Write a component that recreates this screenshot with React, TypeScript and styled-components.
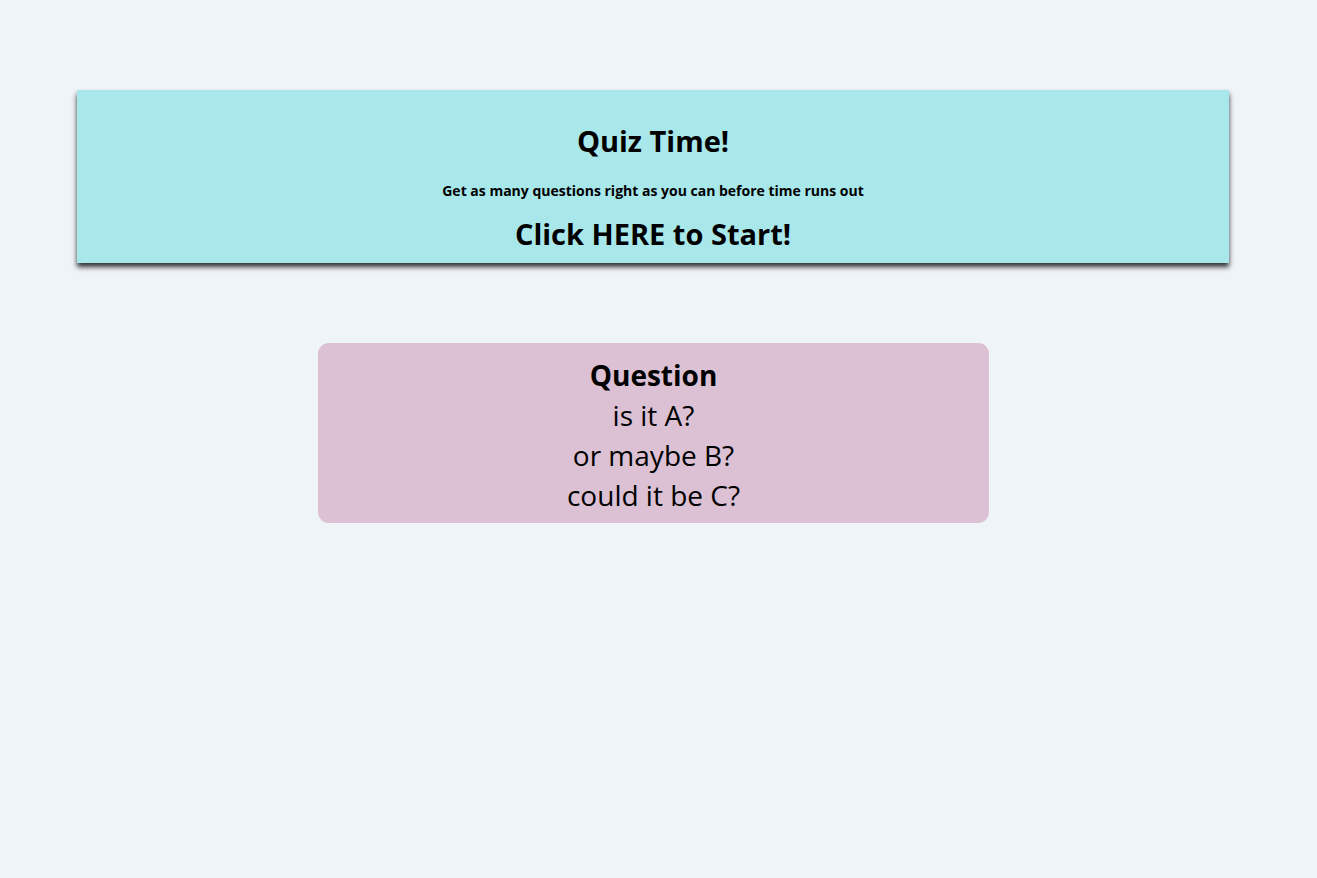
import React from 'react';
import styled, { createGlobalStyle } from 'styled-components';

const GlobalStyle = createGlobalStyle`
  html, body {
    margin: 0;
    padding: 0;
    background: #eff4f8;
    font-family: 'Open Sans', 'Noto Sans', sans-serif;
    color: #000;
  }
`;

const Page = styled.div`
  display: flex;
  flex-direction: column;
  align-items: flex-start;
  padding: 90px 0 0 77px;
  min-height: 100vh;
  box-sizing: border-box;
`;

const Header = styled.header`
  width: 1152px;
  height: 173px;
  box-sizing: border-box;
  background: #a8e7ea;
  box-shadow: 0 4px 5px rgba(0, 0, 0, 0.8);
  display: flex;
  flex-direction: column;
  align-items: center;
  padding-top: 33px;
`;

const Title = styled.h1`
  margin: 0;
  font-size: 29px;
  font-weight: 700;
  line-height: 36px;
`;

const Subtitle = styled.p`
  margin: 22px 0 0;
  font-size: 14px;
  font-weight: 700;
  line-height: 20px;
`;

const StartButton = styled.h2`
  margin: 13px 0 0;
  font-size: 29px;
  font-weight: 700;
  line-height: 40px;
  cursor: pointer;
`;

const QuestionCard = styled.section`
  margin: 80px 0 0 241px;
  width: 671px;
  height: 180px;
  box-sizing: border-box;
  background: #dbc1d3;
  border-radius: 11px;
  display: flex;
  flex-direction: column;
  align-items: center;
  padding-top: 12px;
`;

const QuestionTitle = styled.div`
  font-size: 28px;
  font-weight: 700;
  line-height: 40px;
`;

const Choice = styled.div`
  font-size: 28px;
  line-height: 40px;
`;

const choices = ['is it A?', 'or maybe B?', 'could it be C?'];

const App = () => {
  return (
    <Page>
      <GlobalStyle />
      <Header>
        <Title>Quiz Time!</Title>
        <Subtitle>Get as many questions right as you can before time runs out</Subtitle>
        <StartButton>Click HERE to Start!</StartButton>
      </Header>
      <QuestionCard>
        <QuestionTitle>Question</QuestionTitle>
        {choices.map((c) => (
          <Choice key={c}>{c}</Choice>
        ))}
      </QuestionCard>
    </Page>
  );
};

export default App;
